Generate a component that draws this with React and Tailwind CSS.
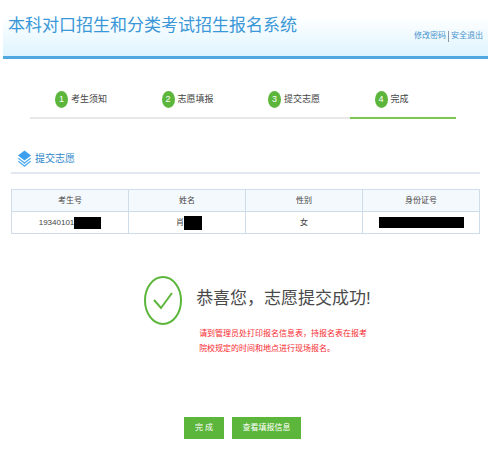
const steps = [
  { number: 1, label: '考生须知' },
  { number: 2, label: '志愿填报' },
  { number: 3, label: '提交志愿' },
  { number: 4, label: '完成', active: true }
]

const columns = ['考生号', '姓名', '性别', '身份证号']

function Header() {
  return (
    <header className="flex h-[59px] items-start justify-between border-b-3 border-[#4fa8e2] bg-linear-to-b from-white from-30% to-[#def4fe] px-[5px]">
      <h1 className="pt-[13px] text-[17px] leading-[26px] whitespace-nowrap text-[#3a97d8]">
        本科对口招生和分类考试招生报名系统
      </h1>
      <nav className="flex items-center gap-[2px] pt-[30px] text-[8px] leading-[12px] whitespace-nowrap text-[#4b94cd]">
        <a href="#password">修改密码</a>
        <span className="h-[11px] w-px bg-[#8a97a8]" />
        <a href="#logout">安全退出</a>
      </nav>
    </header>
  )
}

function Steps() {
  return (
    <ol className="mt-[27px] mr-8 ml-[27px] grid grid-cols-4">
      {steps.map((step) => (
        <li
          key={step.number}
          className={`flex h-[33px] items-start gap-[3px] border-b-2 pt-[5px] pl-[25px] text-[9px] leading-[17px] text-[#444] ${
            step.active ? 'border-[#7cc653]' : 'border-[#e8e8e8]'
          }`}
        >
          <span className="flex h-[17px] w-[13px] items-center justify-center rounded-[50%] bg-[#5db63c] text-white">
            {step.number}
          </span>
          {step.label}
        </li>
      ))}
    </ol>
  )
}

function LayersIcon() {
  return (
    <svg viewBox="0 0 13 17" className="h-[17px] w-[13px]" aria-hidden="true">
      <path d="M6.5 0.5 13 5.5 6.5 10.5 0 5.5Z" fill="#3ba0f0" />
      <path d="M0.3 8.2 6.5 13 12.7 8.2M0.3 11.2 6.5 16 12.7 11.2" fill="none" stroke="#55aef2" strokeWidth="1.4" />
    </svg>
  )
}

// Blacked-out part of a personal value
function Redacted({ className }) {
  return <span className={`inline-block bg-black ${className}`} />
}

function ApplicantTable() {
  return (
    <table className="mt-[15px] w-full table-fixed border-collapse text-center text-[8px] leading-[12px] text-[#444]">
      <thead>
        <tr className="h-[22px] bg-[#f4f9fe]">
          {columns.map((column) => (
            <th key={column} className="border border-[#cfdce9] p-0 pt-px font-normal">{column}</th>
          ))}
        </tr>
      </thead>
      <tbody>
        <tr className="h-[22px]">
          <td className="border border-[#cfdce9] p-0">
            <span className="flex items-center justify-center">
              19340101
              <Redacted className="h-[12px] w-[27px]" />
            </span>
          </td>
          <td className="border border-[#cfdce9] p-0">
            <span className="flex items-center justify-center pl-1">
              肖
              <Redacted className="h-[14px] w-[18px]" />
            </span>
          </td>
          <td className="border border-[#cfdce9] p-0">女</td>
          <td className="border border-[#cfdce9] p-0">
            <span className="flex items-center justify-center">
              <Redacted className="h-[11px] w-[85px]" />
            </span>
          </td>
        </tr>
      </tbody>
    </table>
  )
}

function SuccessMessage() {
  return (
    <section className="mt-[42px] flex justify-center gap-[14px] pl-6">
      <svg viewBox="0 0 38 49" className="h-[49px] w-[38px] shrink-0" fill="none" stroke="#5db63c" aria-hidden="true">
        <ellipse cx="19" cy="24.5" rx="18" ry="23.4" strokeWidth="2" />
        <path d="M10 24 17 32 28 17" strokeWidth="2" />
      </svg>
      <div className="pt-[10px]">
        <h3 className="text-[17px] leading-[26px] whitespace-nowrap text-[#4a4a4a]">恭喜您，志愿提交成功!</h3>
        <p className="mt-[14px] ml-[3px] text-[8px] leading-[15px] whitespace-nowrap text-[#f8292f]">
          请到管理员处打印报名信息表，持报名表在报考
          <br />
          院校规定的时间和地点进行现场报名。
        </p>
      </div>
    </section>
  )
}

export default function App() {
  return (
    <div className="min-h-screen bg-white pr-[2px] pl-[3px] font-['Liberation_Sans','Noto_Sans_CJK_SC',sans-serif]">
      <Header />
      <main className="pb-4">
        <Steps />
        <div className="mx-2">
          <h2 className="mt-[31px] flex h-6 items-start gap-1 border-b-2 border-[#e1e8f2] pl-[7px] text-[10px] leading-[17px] text-[#2f86c8]">
            <LayersIcon />
            提交志愿
          </h2>
          <ApplicantTable />
          <SuccessMessage />
          <div className="mt-[61px] flex justify-center gap-2 pr-[6px] text-[8px] leading-[22px] text-white">
            <button type="button" className="h-[22px] w-10 bg-[#5db63c]">完 成</button>
            <button type="button" className="h-[22px] w-[69px] bg-[#5db63c]">查看填报信息</button>
          </div>
        </div>
      </main>
    </div>
  )
}
